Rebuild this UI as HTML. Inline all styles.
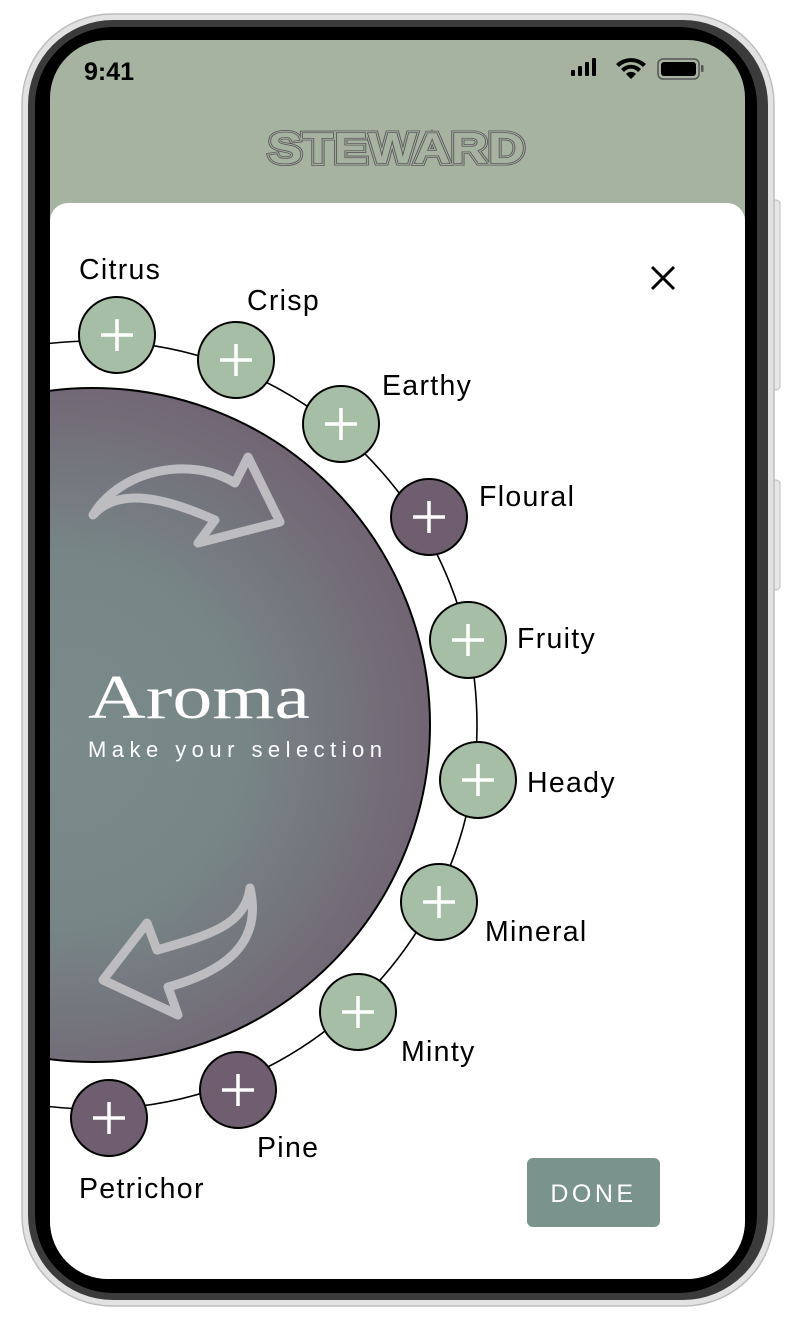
<!DOCTYPE html>
<html><head><meta charset="utf-8"><style>
html,body{margin:0;padding:0;background:#fff;width:792px;height:1325px;overflow:hidden}
svg{display:block}
</style></head><body>
<svg width="792" height="1325" viewBox="0 0 792 1325" xmlns="http://www.w3.org/2000/svg">
<defs>
<radialGradient id="g" cx="60" cy="740" r="380" gradientUnits="userSpaceOnUse">
<stop offset="0" stop-color="#7a8b89"/><stop offset="0.5" stop-color="#778586"/><stop offset="1" stop-color="#716373"/>
</radialGradient>
<clipPath id="scr"><rect x="50" y="40" width="695" height="1239" rx="58"/></clipPath>
</defs>
<rect x="770" y="200" width="10" height="190" rx="4" fill="#e6e6e6" stroke="#bdbdbd"/>
<rect x="770" y="480" width="10" height="110" rx="4" fill="#e6e6e6" stroke="#bdbdbd"/>
<rect x="22" y="14" width="752" height="1292" rx="90" fill="#e2e2e2" stroke="#bdbdbd" stroke-width="1.5"/>
<rect x="28" y="20" width="740" height="1280" rx="85" fill="#3b3b3b"/>
<rect x="35" y="27" width="722" height="1266" rx="78" fill="#000"/>
<g clip-path="url(#scr)">
<rect x="50" y="40" width="695" height="1240" fill="#a6b3a0"/>
<rect x="50" y="203" width="695" height="1100" rx="18" fill="#fff"/>
<circle cx="93" cy="725" r="337" fill="url(#g)" stroke="#000" stroke-width="2"/>
<circle cx="93" cy="725" r="384" fill="none" stroke="#000" stroke-width="1.6"/>
<g fill="none" stroke="#c3c2c6" stroke-width="9" stroke-linejoin="round" stroke-linecap="round" opacity="0.92">
<path d="M93,515 C120,470 190,455 235,483 L248,457 L280,522 L198,543 L215,520 C170,500 120,485 93,515 Z"/>
<path d="M250,888 C262,940 230,970 168,987 L178,1015 L103,980 L147,923 L157,950 C210,935 245,925 250,888 Z"/>
</g>
<text x="88" y="718" font-family="Liberation Serif, serif" font-size="62" fill="#fff" textLength="222" lengthAdjust="spacingAndGlyphs">Aroma</text>
<text x="88" y="757" font-family="Liberation Sans, sans-serif" font-size="22" fill="#fff" textLength="294" lengthAdjust="spacing">Make your selection</text>
<g stroke="#000" stroke-width="2">
<circle cx="117" cy="335" r="38" fill="#a7bea6"/>
<circle cx="236" cy="360" r="38" fill="#a7bea6"/>
<circle cx="341" cy="424" r="38" fill="#a7bea6"/>
<circle cx="429" cy="517" r="38" fill="#6f5e6f"/>
<circle cx="468" cy="640" r="38" fill="#a7bea6"/>
<circle cx="478" cy="780" r="38" fill="#a7bea6"/>
<circle cx="439" cy="902" r="38" fill="#a7bea6"/>
<circle cx="358" cy="1012" r="38" fill="#a7bea6"/>
<circle cx="238" cy="1090" r="38" fill="#6f5e6f"/>
<circle cx="109" cy="1118" r="38" fill="#6f5e6f"/>
</g>
<g stroke="#fff" stroke-width="3.5">
<path d="M101,335h32M117,319v32"/>
<path d="M220,360h32M236,344v32"/>
<path d="M325,424h32M341,408v32"/>
<path d="M413,517h32M429,501v32"/>
<path d="M452,640h32M468,624v32"/>
<path d="M462,780h32M478,764v32"/>
<path d="M423,902h32M439,886v32"/>
<path d="M342,1012h32M358,996v32"/>
<path d="M222,1090h32M238,1074v32"/>
<path d="M93,1118h32M109,1102v32"/>
</g>
<g font-family="Liberation Sans, sans-serif" font-size="28.5" fill="#000" letter-spacing="1.3">
<text x="79" y="279">Citrus</text>
<text x="247" y="310">Crisp</text>
<text x="382" y="395">Earthy</text>
<text x="479" y="506">Floural</text>
<text x="517" y="648">Fruity</text>
<text x="527" y="792">Heady</text>
<text x="485" y="941">Mineral</text>
<text x="401" y="1061">Minty</text>
<text x="257" y="1157">Pine</text>
<text x="79" y="1198">Petrichor</text>
</g>
<path d="M652,267l22,22M674,267l-22,22" stroke="#000" stroke-width="3"/>
<rect x="527" y="1158" width="133" height="69" rx="6" fill="#7b938d"/>
<text x="593.5" y="1202" text-anchor="middle" font-family="Liberation Sans, sans-serif" font-size="25" fill="#fff" letter-spacing="3.5">DONE</text>
<text x="84" y="80" font-family="Liberation Sans, sans-serif" font-size="25" font-weight="bold" fill="#000">9:41</text>
<g fill="#000">
<rect x="571" y="70" width="4" height="6" rx="1"/><rect x="578" y="66" width="4" height="10" rx="1"/><rect x="585" y="62" width="4" height="14" rx="1"/><rect x="592" y="58" width="4" height="18" rx="1"/>
<path d="M616,64 a22,22 0 0 1 30,0 l-3,3 a17,17 0 0 0 -24,0z M621,69 a14,14 0 0 1 20,0 l-3,3 a9,9 0 0 0 -14,0z M626,74 l5,5 l5,-5 a7,7 0 0 0 -10,0z"/>
<rect x="658" y="59" width="41" height="20" rx="5" fill="none" stroke="#555" stroke-width="1.5"/>
<rect x="661" y="62" width="35" height="14" rx="3"/>
<rect x="701" y="65" width="2.5" height="7" rx="1" fill="#555"/>
</g>
<g font-family="Liberation Sans, sans-serif" font-size="44" font-weight="bold">
<text x="268" y="163" textLength="257" lengthAdjust="spacingAndGlyphs" fill="none" stroke="#5d585d" stroke-width="5">STEWARD</text>
<text x="268" y="163" textLength="257" lengthAdjust="spacingAndGlyphs" fill="none" stroke="#a6b3a0" stroke-width="3.4">STEWARD</text>
<text x="268" y="163" textLength="257" lengthAdjust="spacingAndGlyphs" fill="none" stroke="#5d585d" stroke-width="1.6">STEWARD</text>
<text x="268" y="163" textLength="257" lengthAdjust="spacingAndGlyphs" fill="#a6b3a0" stroke="none">STEWARD</text>
</g>
</g>
</svg>
</body></html>
